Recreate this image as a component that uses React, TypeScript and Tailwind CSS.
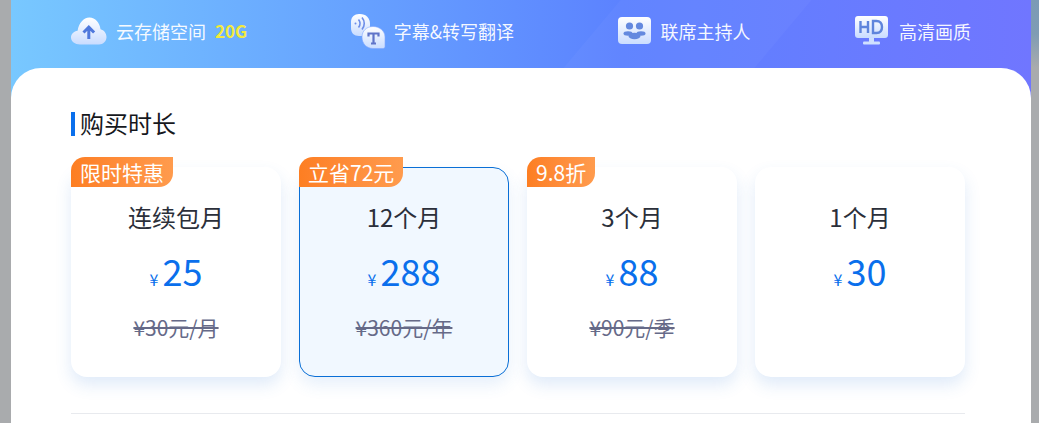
const FONT = "font-['Noto_Sans_CJK_SC','Noto_Sans',sans-serif]"

const plans = [
  { name: '连续包月', price: '25', old: '¥30元/月', badge: '限时特惠', active: false },
  { name: '12个月', price: '288', old: '¥360元/年', badge: '立省72元', active: true },
  { name: '3个月', price: '88', old: '¥90元/季', badge: '9.8折', active: false },
  { name: '1个月', price: '30', old: '', badge: '', active: false },
]

function IconDefs() {
  return (
    <svg width="0" height="0" className="absolute">
      <defs>
        <linearGradient id="icon-fill" x1="0" y1="0" x2="0" y2="1">
          <stop offset="0" stopColor="#ffffff" />
          <stop offset="1" stopColor="#c9dcff" />
        </linearGradient>
      </defs>
    </svg>
  )
}

function CloudIcon() {
  return (
    <svg width="36" height="28" viewBox="0 0 36 28">
      <path d="M9 27.500C4 27.500 0 24.400 0 20.500c0-3.600 2.900-6.300 6.600-6.800C7.800 6.500 12.300.5 18.500.5c5.800 0 10.300 5.200 11 11.700 3.500.9 6 4 6 7.800 0 4.200-3.300 7.500-7.500 7.500z" fill="url(#icon-fill)" />
      <path d="M17.800 22V10M12.500 15.500l5.300-5.300 5.300 5.300" fill="none" stroke="#4f78dc" strokeWidth="3" />
    </svg>
  )
}

function SubtitleIcon() {
  return (
    <svg width="36" height="36" viewBox="0 0 36 36">
      <path d="M1 8.500C1 4 4.600 1 9 1h1c6 0 10 4 10 10v9c0 2-1 3-3 3H9c-5 0-8-3-8-8z" fill="url(#icon-fill)" />
      <circle cx="5.500" cy="10.500" r="1" fill="#6c8ce8" />
      <path d="M8.500 6.500c2 2.500 2 5.500 0 8M12 4.500c3 3.500 3 8.500 0 12" fill="none" stroke="#6c8ce8" strokeWidth="1.600" />
      <path d="M12 24c0-6 4.500-10.500 11-10.500S35 18 35 24v9.500c0 1.200-.8 2-2 2H23c-6.500 0-11-5-11-11.500z" fill="url(#icon-fill)" stroke="#7fa6ff" strokeWidth=".6" />
      <path d="M18.500 23.500v-3h10v3M23.500 20.500v10M21 30.500h5" fill="none" stroke="#5f74c9" strokeWidth="2.200" />
    </svg>
  )
}

function HostIcon() {
  return (
    <svg width="33" height="27" viewBox="0 0 33 27">
      <rect width="33" height="27" rx="4" fill="url(#icon-fill)" />
      <circle cx="11.500" cy="9" r="3.600" fill="#5f86de" />
      <circle cx="21.500" cy="9" r="3.600" fill="#5f86de" />
      <ellipse cx="10" cy="16.500" rx="4.500" ry="2.200" fill="#5f86de" />
      <ellipse cx="23" cy="16.500" rx="4.500" ry="2.200" fill="#5f86de" />
      <ellipse cx="16.500" cy="19" rx="6" ry="3.200" fill="#5f86de" />
    </svg>
  )
}

function HdIcon() {
  return (
    <svg width="33" height="29" viewBox="0 0 33 29">
      <path d="M3 0h27c1.800 0 3 1.200 3 3v16c0 1.800-1.200 3-3 3H3c-1.800 0-3-1.200-3-3V3c0-1.800 1.200-3 3-3z" fill="url(#icon-fill)" />
      <rect x="14" y="22" width="5" height="4" fill="#cfe0ff" />
      <rect x="8" y="25.500" width="17" height="3" rx="1" fill="#cfe0ff" />
      <path d="M5.500 5v12M13 5v12M5.500 11h7.500" fill="none" stroke="#5f85dc" strokeWidth="2.400" />
      <path d="M18 5v12h3.500c3.500 0 5.500-2.200 5.500-6s-2-6-5.500-6z" fill="none" stroke="#5f85dc" strokeWidth="2.400" />
    </svg>
  )
}

function Feature({ icon, children }: { icon: React.ReactNode; children: React.ReactNode }) {
  return (
    <div className="flex items-center text-[18px] leading-[26px] text-white/95">
      {icon}
      {children}
    </div>
  )
}

function PlanCard({ plan }: { plan: (typeof plans)[number] }) {
  return (
    <div
      className={
        plan.active
          ? 'relative flex h-[210px] w-[210px] flex-col items-center rounded-[16px] border border-[#0a6fd6] bg-[#f1f8ff] shadow-[0_8px_16px_rgba(60,130,220,0.12)]'
          : 'relative flex h-[210px] w-[210px] flex-col items-center rounded-[16px] border border-transparent bg-white shadow-[0_8px_16px_rgba(60,130,220,0.16)]'
      }
    >
      {plan.badge && (
        <div className="absolute top-[-11px] left-[-1px] h-[30px] rounded-tl-[14px] rounded-br-[14px] bg-gradient-to-r from-[#fd7e22] to-[#ff9b4d] px-[9px] text-[21px] leading-[30px] text-white">
          {plan.badge}
        </div>
      )}
      <div className="mt-[33px] text-[24px] leading-[32px] text-[#2b2f3a]">{plan.name}</div>
      <div className="mt-[14px] flex items-baseline text-[#0a6fec]">
        <span className="mr-[4px] text-[16px]">¥</span>
        <span className="text-[36px] leading-[46px]">{plan.price}</span>
      </div>
      {plan.old && <div className="mt-[19px] text-[21px] leading-[30px] text-[#666a88] line-through">{plan.old}</div>}
    </div>
  )
}

export default function App() {
  return (
    <div className={`${FONT} flex h-[423px] w-[1039px] overflow-hidden bg-[#a9abad]`}>
      <IconDefs />
      <div className="ml-[11px] w-[1020px] bg-gradient-to-r from-[#78c8ff] via-[#5c82ff] via-60% to-[#7076ff]">
        <div className="relative flex h-[68px] items-center justify-between overflow-hidden px-[60px] pb-[7px]">
          <div className="absolute top-0 left-[581px] h-[68px] w-[191px] -skew-x-[40deg] bg-white/[0.03]" />
          <Feature icon={<CloudIcon />}>
            <span className="ml-[9px]">云存储空间</span>
            <span className="ml-[9px] -mr-[1px] text-[17px] font-semibold text-[#f2ea3c]">20G</span>
          </Feature>
          <Feature icon={<SubtitleIcon />}>
            <span className="ml-[8px]">字幕&amp;转写翻译</span>
          </Feature>
          <Feature icon={<HostIcon />}>
            <span className="ml-[10px] mr-px">联席主持人</span>
          </Feature>
          <Feature icon={<HdIcon />}>
            <span className="ml-[11px]">高清画质</span>
          </Feature>
        </div>
        <div className="h-[355px] rounded-t-[30px] bg-white px-[60px]">
          <div className="flex pt-[44px]">
            <div className="h-[24px] w-[4px] bg-[#0a6fec]" />
            <div className="ml-[5px] text-[24px] leading-[22px] text-[#16181d]">购买时长</div>
          </div>
          <div className="mt-[31px] flex gap-[18px]">
            {plans.map(p => (
              <PlanCard key={p.name} plan={p} />
            ))}
          </div>
          <div className="mt-[36px] h-px w-[894px] bg-[#e8eaee]" />
        </div>
      </div>
      <div className="h-[68px] w-[8px] bg-gradient-to-b from-[#7b9ab6] via-[#7f9cb4] to-[#a9abad]" />
    </div>
  )
}
